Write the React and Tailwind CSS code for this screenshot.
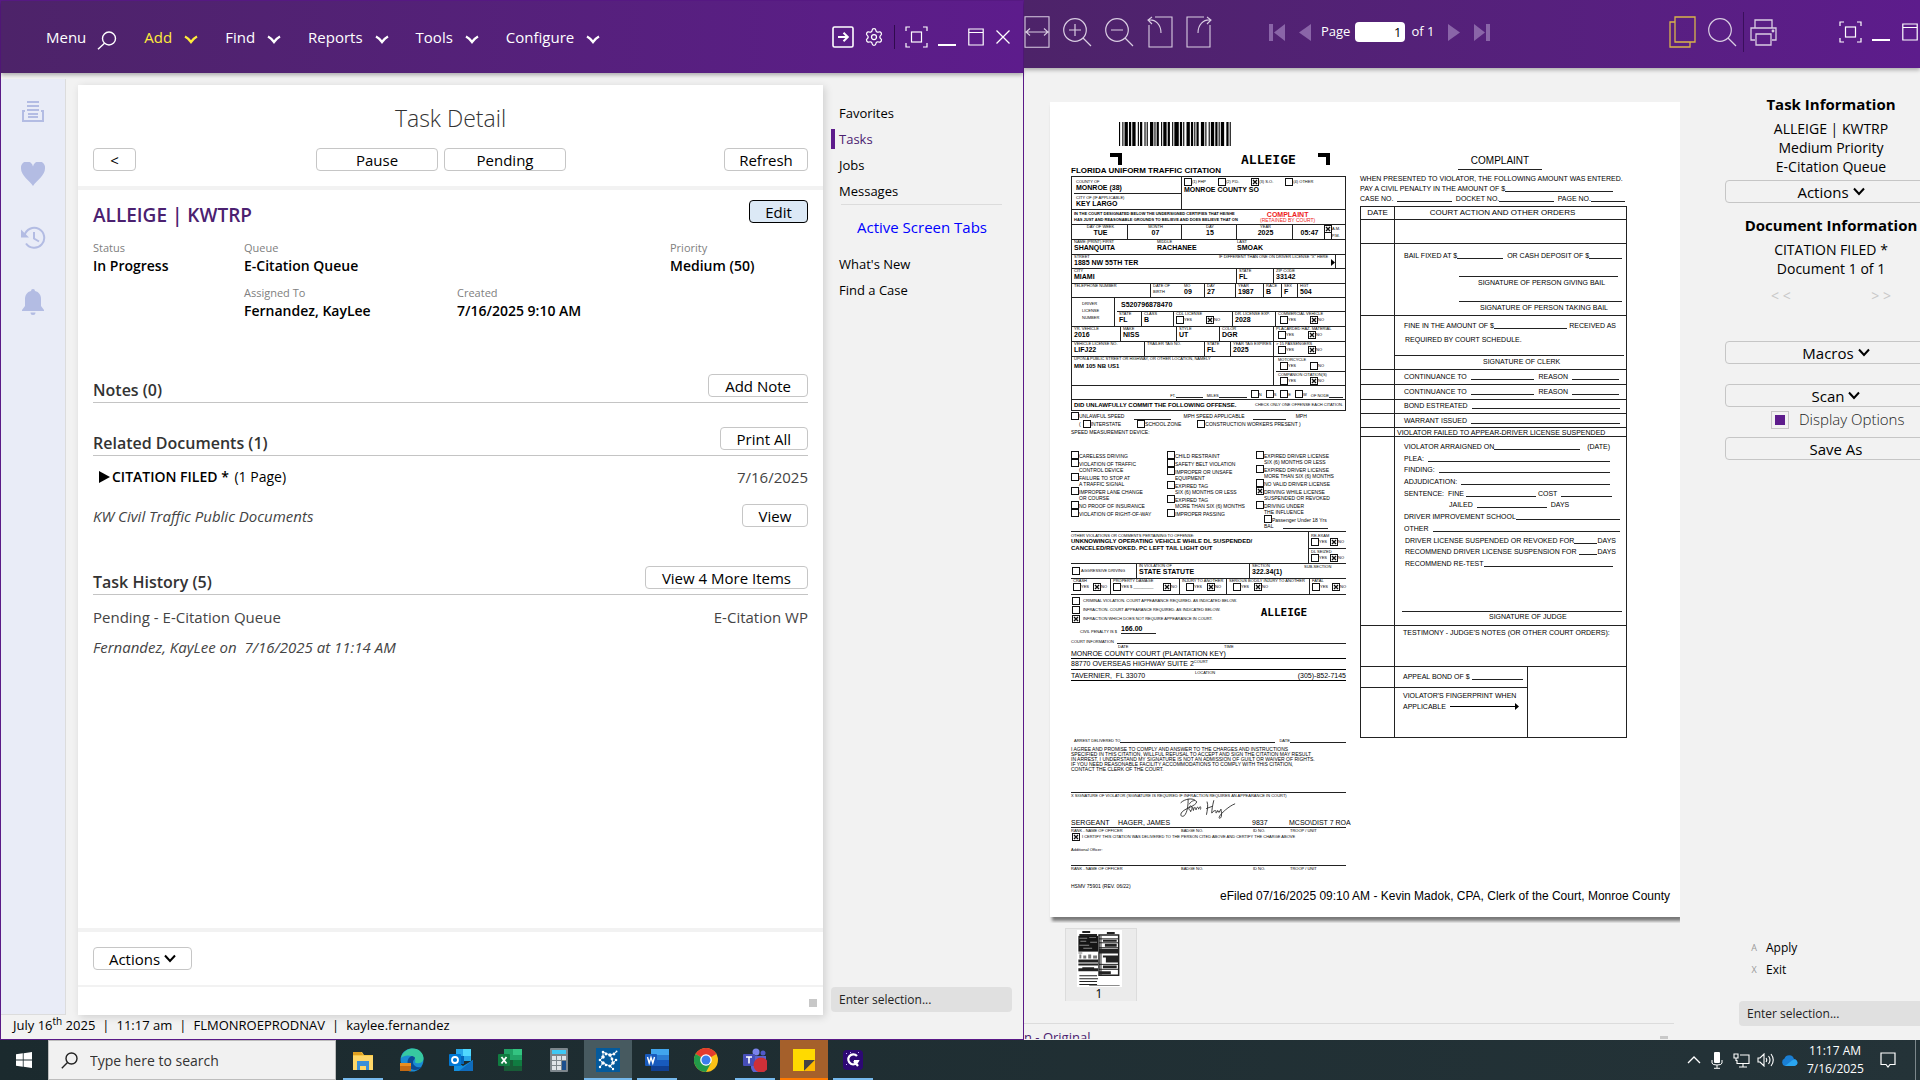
import React from "react";
import { Heart, Bell, Settings } from "lucide-react";

/* ---------- shared icons ---------- */

const Chevron = ({ className = "" }) => (
  <svg viewBox="0 0 14 9" className={`h-[9px] w-[14px] shrink-0 ${className}`} fill="none" stroke="currentColor" strokeWidth="2.4">
    <path d="M1 1.5 Q4 3 7 7 Q10 3 13 1.5" />
  </svg>
);

const Down = () => (
  <svg viewBox="0 0 12 9" className="h-[9px] w-3 shrink-0" fill="none" stroke="currentColor" strokeWidth="2">
    <path d="M1 1.5 L6 7 L11 1.5" />
  </svg>
);

const FocusIcon = () => (
  <svg viewBox="0 0 23 22" className="h-[22px] w-[23px] shrink-0" fill="none" stroke="currentColor" strokeWidth="1.2">
    <path d="M1 5V1h4M18 1h4v4M22 17v4h-4M5 21H1v-4" />
    <rect x="6.5" y="6" width="10" height="10" />
  </svg>
);

const MinIcon = () => (
  <svg viewBox="0 0 18 22" className="h-[22px] w-[18px] shrink-0" fill="currentColor">
    <rect x="0" y="18" width="18" height="2" />
  </svg>
);

const MaxIcon = () => (
  <svg viewBox="0 0 16 18" className="h-[18px] w-4 shrink-0" fill="none" stroke="currentColor" strokeWidth="1.2">
    <path d="M.8 1h14.4v16H.8zM.8 4.5h14.4" />
  </svg>
);

const IconButton = ({ label, children, className = "" }) => (
  <button type="button" aria-label={label} className={`flex shrink-0 items-center justify-center ${className}`}>
    {children}
  </button>
);

const Button = ({ children, className = "" }) => (
  <button
    type="button"
    className={`flex h-[23px] items-center justify-center gap-1 rounded-[4px] border text-[15px] leading-5 text-black ${className}`}
  >
    {children}
  </button>
);

/* ---------- left window ---------- */

const MENU = [
  { name: "Add", tone: "text-[#ffeb3b]" },
  { name: "Find", tone: "text-white" },
  { name: "Reports", tone: "text-white" },
  { name: "Tools", tone: "text-white" },
  { name: "Configure", tone: "text-white" },
];

const Header = () => (
  <header className="relative z-10 flex h-[72px] shrink-0 items-center bg-linear-to-r from-[#4d2369] to-[#5d1c8c] pr-[13px] pl-[45px] text-[15px] text-white shadow-[0_2px_4px_rgba(0,0,0,0.3)]">
    <nav className="flex items-center gap-[27px] pt-px">
      <button type="button" className="flex items-center gap-[11px]">
        Menu
        <svg viewBox="0 0 20 19" className="mt-1.5 h-[19px] w-5" fill="none" stroke="currentColor" strokeWidth="1.4">
          <circle cx="12" cy="7.5" r="6.5" />
          <path d="M7.5 12.3 L1 18.3" />
        </svg>
      </button>
      {MENU.map((m) => (
        <button key={m.name} type="button" className={`flex items-center gap-3 ${m.tone}`}>
          {m.name}
          <Chevron className="mt-1" />
        </button>
      ))}
    </nav>
    <div className="ml-auto flex items-center">
      <IconButton label="Open">
        <svg viewBox="0 0 22 22" className="size-[22px]" fill="none" stroke="currentColor" strokeWidth="1.6">
          <rect x="1" y="1" width="20" height="20" rx="1.5" />
          <path d="M6 11h9.5M11.5 6.8 L15.8 11 L11.5 15.2" strokeWidth="2" />
        </svg>
      </IconButton>
      <IconButton label="Settings" className="ml-2.5">
        <Settings className="size-5" strokeWidth={1.5} />
      </IconButton>
      <span className="mx-2.5 h-6 w-px bg-[#2f0b4d]" />
      <IconButton label="Focus"><FocusIcon /></IconButton>
      <IconButton label="Minimize" className="ml-2.5"><MinIcon /></IconButton>
      <IconButton label="Maximize" className="ml-3"><MaxIcon /></IconButton>
      <IconButton label="Close" className="ml-3">
        <svg viewBox="0 0 14 14" className="size-3.5" stroke="currentColor" strokeWidth="1.3">
          <path d="M.5 .5l13 13M13.5 .5l-13 13" />
        </svg>
      </IconButton>
    </div>
  </header>
);

const Rail = () => (
  <aside className="mt-1.5 flex w-[65px] shrink-0 flex-col items-center gap-[39px] border-r border-b border-[#dcdcdc] bg-[#e9ecf7] pt-5 text-[#b3bce3]">
    <IconButton label="Inbox">
      <svg viewBox="0 0 24 24" className="size-6" fill="none" stroke="currentColor" strokeWidth="2">
        <path d="M6 3h12M6 7h12M6 11h12M7 15h10M7 18h10" />
        <path d="M4 12H2v10h20V12h-2" />
      </svg>
    </IconButton>
    <IconButton label="Favorites">
      <svg viewBox="0 0 24 24" className="size-6" fill="currentColor">
        <path d="M12 24C8 18 0 13.500 0 6.500A6 6 0 0 1 12 4.500A6 6 0 0 1 24 6.500C24 13.500 16 18 12 24z" />
      </svg>
    </IconButton>
    <IconButton label="History">
      <svg viewBox="0 0 26 25" className="h-[25px] w-[26px]" fill="none" stroke="currentColor" strokeWidth="2">
        <path d="M4.5 10.5A10 10 0 1 1 6 18.5" />
        <path d="M14 7v6.5l5 3" />
        <path d="M1 4.5v8h8z" fill="currentColor" stroke="none" />
      </svg>
    </IconButton>
    <IconButton label="Alerts">
      <svg viewBox="0 0 24 26" className="h-[26px] w-6" fill="currentColor">
        <path d="M12 0a2 2 0 0 1 2 2c4 1 6 4 6 8v7l3 4v1H1v-1l3-4v-7c0-4 2-7 6-8a2 2 0 0 1 2-2zM9.500 23.500h5a2.500 2.500 0 0 1-5 0z" />
      </svg>
    </IconButton>
  </aside>
);

const Field = ({ label, value, className = "" }) => (
  <div className={className}>
    <dt className="text-[11px] leading-4 text-[#808080]">{label}</dt>
    <dd className="text-[14px] leading-5 font-semibold text-black">{value}</dd>
  </div>
);

const Section = ({ title, action, className = "" }) => (
  <div className={`flex h-7 items-start justify-between border-b border-[#c4c4c4] ${className}`}>
    <h3 className="mt-[5px] text-[16px] leading-5 font-semibold text-[#333]">{title}</h3>
    <Button className="-mt-px border-[#c6c6c6] bg-white px-4">{action}</Button>
  </div>
);

const TaskCard = () => (
  <main className="mt-3 ml-3 flex min-w-0 flex-1 flex-col bg-white shadow-[2px_2px_8px_rgba(0,0,0,0.15)]">
    <div className="flex h-[105px] shrink-0 flex-col border-b-4 border-[#f2f2f2] px-[15px]">
      <h1 className="mt-[17px] text-center text-[23px] leading-8 font-light text-[#333]">Task Detail</h1>
      <div className="mt-3.5 flex items-center justify-between">
        <Button className="w-[43px] border-[#c6c6c6] bg-white text-[13px]">&lt;</Button>
        <div className="ml-[22px] flex gap-1.5">
          <Button className="w-[122px] border-[#c6c6c6] bg-white">Pause</Button>
          <Button className="w-[122px] border-[#c6c6c6] bg-white">Pending</Button>
        </div>
        <Button className="w-[84px] border-[#c6c6c6] bg-white">Refresh</Button>
      </div>
    </div>
    <div className="flex-1 px-[15px] pt-2.5">
      <div className="flex items-start justify-between">
        <h2 className="pt-px text-[19px] leading-7 font-semibold text-[#4b2170]">ALLEIGE | KWTRP</h2>
        <Button className="w-[59px] border-black bg-[#dce9f6]">Edit</Button>
      </div>
      <dl className="mt-[11px] grid grid-cols-[151px_213px_213px_1fr] gap-y-[9px]">
        <Field label="Status" value="In Progress" />
        <Field label="Queue" value="E-Citation Queue" className="col-span-2" />
        <Field label="Priority" value="Medium (50)" />
        <Field label="Assigned To" value="Fernandez, KayLee" className="col-start-2" />
        <Field label="Created" value="7/16/2025 9:10 AM" />
      </dl>
      <Section title="Notes (0)" action="Add Note" className="mt-[54px]" />
      <Section title="Related Documents (1)" action="Print All" className="mt-[25px]" />
      <div className="mt-[11px] flex justify-between text-[14px] leading-5">
        <p className="flex items-center gap-0.5 pl-1.5 text-black">
          <svg viewBox="0 0 11 12" className="h-3 w-[11px]"><path d="M0 0L11 6L0 12z" /></svg>
          <span className="font-semibold">CITATION FILED *</span>&nbsp;(1 Page)
        </p>
        <span className="text-[15px] text-[#444]">7/16/2025</span>
      </div>
      <div className="mt-[17px] flex items-center justify-between">
        <p className="text-[15px] leading-5 text-[#444] italic">KW Civil Traffic Public Documents</p>
        <Button className="w-[66px] border-[#c6c6c6] bg-white">View</Button>
      </div>
      <Section title="Task History (5)" action="View 4 More Items" className="mt-10" />
      <div className="mt-3 flex justify-between text-[15px] leading-5 text-[#444]">
        <span>Pending - E-Citation Queue</span>
        <span>E-Citation WP</span>
      </div>
      <p className="mt-2.5 text-[15px] leading-5 text-[#444] italic">Fernandez, KayLee on&nbsp; 7/16/2025 at 11:14 AM</p>
    </div>
    <div className="border-t-4 border-b-2 border-[#f2f2f2] px-[15px] pt-[15px] pb-[15px]">
      <Button className="w-[99px] border-[#c6c6c6] bg-white">Actions <Down /></Button>
    </div>
    <div className="flex h-7 items-center justify-end pr-1.5">
      <span className="mt-1 size-2 bg-[#c8c8c8]" />
    </div>
  </main>
);

const NAV = ["Favorites", "Tasks", "Jobs", "Messages"];

const SideNav = () => (
  <aside className="flex w-[200px] shrink-0 flex-col pr-[11px] pl-2 text-[13px] text-black">
    <nav className="mt-[27px] flex flex-col">
      {NAV.map((n) => (
        <a
          key={n}
          href="#"
          className={n === "Tasks" ? "my-[3px] border-l-4 border-[#5d1c8c] pl-1 leading-5 text-[#4b2170]" : "my-[3px] pl-2 leading-5"}
        >
          {n}
        </a>
      ))}
    </nav>
    <div className="mx-2.5 border-t border-[#dcdcdc] pt-3">
      <p className="pl-4 text-[15px] leading-5 text-[#0000ff]">Active Screen Tabs</p>
    </div>
    <nav className="mt-3.5 flex flex-col">
      <a href="#" className="my-[3px] pl-2 leading-5">What's New</a>
      <a href="#" className="my-[3px] pl-2 leading-5">Find a Case</a>
    </nav>
    <input
      aria-label="Enter selection"
      placeholder="Enter selection..."
      className="mt-auto mb-[3px] h-[25px] w-full rounded-[4px] bg-[#e0e0e0] px-2 text-[12px] placeholder:text-[#222]"
    />
  </aside>
);

const LeftWindow = () => (
  <section className="z-10 flex min-w-0 flex-col border border-[#5a1a87] bg-[#f2f2f2]">
    <Header />
    <div className="flex min-h-0 flex-1">
      <Rail />
      <TaskCard />
      <SideNav />
    </div>
    <footer className="flex h-6 shrink-0 items-center gap-[7px] pb-0.5 pl-3 text-[13px] text-black">
      <span>July 16<sup className="text-[10px]">th</sup> 2025</span>
      <span>|</span>
      <span>11:17 am</span>
      <span>|</span>
      <span>FLMONROEPRODNAV</span>
      <span>|</span>
      <span>kaylee.fernandez</span>
    </footer>
  </section>
);

/* ---------- citation page: small parts ---------- */

const Box = ({ on }) => (
  <svg viewBox="0 0 8 8" className="size-2 shrink-0" fill="none" stroke="#111">
    <rect x=".5" y=".5" width="7" height="7" strokeWidth="1" />
    {on && <path d="M2 2l4 4M6 2l-4 4" strokeWidth="1.4" />}
  </svg>
);

const Mark = () => (
  <svg viewBox="0 0 12 12" className="size-3"><path d="M0 0h12v12h-4V4H0z" /></svg>
);

const Blank = ({ w }) => <span className={`shrink-0 border-b border-[#222] ${w}`} />;

const Rule = ({ c = "" }) => <div className={`h-px shrink-0 bg-[#222] ${c}`} />;

const Row = ({ h, children }) => <div className={`flex shrink-0 border-t border-[#222] ${h}`}>{children}</div>;

const Cell = ({ w, l, v, children }) => (
  <div className={`shrink-0 border-l border-[#222] pl-0.5 first:border-l-0 ${w}`}>
    {l !== undefined && <p className="text-[4px] leading-[4px]">{l}</p>}
    {v && <p className="text-[7px] leading-[8px] font-bold">{v}</p>}
    {children}
  </div>
);

const YesNo = ({ yes, no, c = "", gap = "w-[30px]" }) => (
  <div className={`flex text-[4px] leading-[4px] ${c}`}>
    <span className={`flex shrink-0 items-center ${gap}`}><Box on={yes} />YES</span>
    <span className="flex items-center"><Box on={no} />NO</span>
  </div>
);

const BARS = [1,2,1,1,3,1,2,1,3,2,1,1,2,2,1,1,1,2,3,1,1,1,2,2,1,1,3,1,2,2,1,1,4,1,2,1,1,2,3,1,2,1,1,1,2,2,3,1,1,2,1,1,3,1,2,1,1,1,3,2,2,1,1,1];

const Barcode = () => {
  let x = 0;
  return (
    <svg viewBox="0 0 103 24" preserveAspectRatio="none" className="h-6 w-[114px]" role="img" aria-label="Barcode">
      {BARS.map((w, i) => {
        const at = x;
        x += w;
        return i % 2 === 0 ? <rect key={i} x={at} y="0" width={w} height="24" fill="#000" /> : null;
      })}
    </svg>
  );
};

const Item = ({ on, a, b, c = "" }) => (
  <div className={`flex shrink-0 ${b ? "h-3.5" : "h-2"} ${c}`}>
    <Box on={on} />
    <span className="pt-0.5 leading-[6px]">{a}{b && <><br />{b}</>}</span>
  </div>
);

const OfficerLabels = () => (
  <div className="grid grid-cols-[110px_72px_37px_1fr] text-[4px] leading-[4px]">
    <span>RANK - NAME OF OFFICER</span><span>BADGE NO.</span><span>ID NO.</span><span>TROOP / UNIT</span>
  </div>
);

/* ---------- citation page: left half ---------- */

const CitationTable = () => (
  <div className="mt-px flex flex-col border-x border-b border-[#222]">
    <Row h="h-[33px]">
      <Cell w="w-[109px] pl-0">
        <div className="h-[17px] border-b border-[#222] pt-0.5 pl-0.5">
          <p className="text-[4px] leading-[5px]">COUNTY OF</p>
          <p className="text-[7px] leading-[8px] font-bold">MONROE (38)</p>
        </div>
        <div className="pt-px pl-0.5">
          <p className="text-[4px] leading-[5px]">CITY OF (IF APPLICABLE)</p>
          <p className="text-[7px] leading-[8px] font-bold">KEY LARGO</p>
        </div>
      </Cell>
      <Cell w="w-[164px]">
        <div className="flex items-center gap-3 pt-px text-[4px] leading-[4px]">
          <span className="flex items-center"><Box />(1) FHP</span>
          <span className="flex items-center"><Box />(2) P.D.</span>
          <span className="flex items-center"><Box on />(3) S.O.</span>
          <span className="flex items-center"><Box />(4) OTHER</span>
        </div>
        <p className="text-[7px] leading-[8px] font-bold">MONROE COUNTY SO</p>
      </Cell>
    </Row>
    <Row h="h-[15px]">
      <div className="w-[188px] pt-px pl-0.5 text-[4px] leading-[6px] font-bold">
        IN THE COURT DESIGNATED BELOW THE UNDERSIGNED CERTIFIES THAT HE/SHE
        <br />
        HAS JUST AND REASONABLE GROUNDS TO BELIEVE AND DOES BELIEVE THAT ON
      </div>
      <div className="text-center text-[#ee1c1c]">
        <p className="pt-px text-[7px] leading-[7px] font-bold">COMPLAINT</p>
        <p className="text-[5px] leading-[5px]">(RETAINED BY COURT)</p>
      </div>
    </Row>
    <Row h="h-[15px]">
      <Cell w="w-[55px] text-center" l="DAY OF WEEK" v="TUE" />
      <Cell w="w-[54px] text-center" l="MONTH" v="07" />
      <Cell w="w-[55px] text-center" l="DAY" v="15" />
      <Cell w="w-[56px] text-center" l="YEAR" v="2025" />
      <Cell w="w-[53px] flex">
        <p className="w-[29px] pt-1 text-center text-[7px] leading-[8px] font-bold">05:47</p>
        <div className="text-[4px] leading-[7px]">
          <span className="flex h-[7px] items-center"><Box on />A.M.</span>
          <span className="flex h-[7px] items-center"><Box />P.M.</span>
        </div>
      </Cell>
    </Row>
    <Row h="h-[15px]">
      <Cell w="w-[83px]" l="NAME (PRINT)   FIRST" v="SHANQUITA" />
      <Cell w="w-[80px] border-l-0" l="MIDDLE" v="RACHANEE" />
      <Cell w="w-[100px] border-l-0" l="LAST" v="SMOAK" />
    </Row>
    <Row h="h-[14px]">
      <Cell w="w-[145px]" l="STREET" v="1885 NW 55TH TER" />
      <Cell w="w-[118px] border-l-0" l={'IF DIFFERENT THAN ONE ON DRIVER LICENSE "X" HERE'}>
        <svg viewBox="0 0 4 7" className="ml-auto h-[7px] w-1"><path d="M0 0l4 3.5L0 7z" /></svg>
      </Cell>
      <Cell w="w-[10px]" />
    </Row>
    <Row h="h-[15px]">
      <Cell w="w-[164px]" l="CITY" v="MIAMI" />
      <Cell w="w-[37px]" l="STATE" v="FL" />
      <Cell w="w-[72px]" l="ZIP CODE" v="33142" />
    </Row>
    <Row h="h-[14px]">
      <Cell w="w-[78px]" l="TELEPHONE NUMBER" />
      <Cell w="w-[32px]" l="DATE OF"><p className="pt-0.5 text-[4px] leading-[4px]">BIRTH</p></Cell>
      <Cell w="w-[22px] border-l-0" l="MO" v="09" />
      <Cell w="w-[31px]" l="DAY" v="27" />
      <Cell w="w-[28px]" l="YEAR" v="1987" />
      <Cell w="w-[18px]" l="RACE" v="B" />
      <Cell w="w-[16px]" l="SEX" v="F" />
      <Cell w="w-[48px]" l="HGT" v="504" />
    </Row>
    <Row h="h-[29px]">
      <Cell w="w-[42px]"><p className="pt-0.5 pl-2 text-[4px] leading-[7px]">DRIVER<br />LICENSE<br />NUMBER</p></Cell>
      <Cell w="w-[231px] pl-0">
        <p className="pt-0.5 pl-1 text-[7px] leading-[10px] font-bold">S520796878470</p>
        <div className="mt-px flex h-[15px] border-t border-[#222]">
          <Cell w="w-[24px]" l="STATE" v="FL" />
          <Cell w="w-[32px]" l="CLASS" v="B" />
          <Cell w="w-[59px]" l="CDL LICENSE"><YesNo no /></Cell>
          <Cell w="w-[43px]" l="DR. LICENSE EXP." v="2028" />
          <Cell w="w-[72px]" l="COMMERCIAL VEHICLE"><YesNo no c="pl-0.5" /></Cell>
        </div>
      </Cell>
    </Row>
    <Row h="h-[15px]">
      <Cell w="w-[48px]" l="YR. VEHICLE" v="2016" />
      <Cell w="w-[56px]" l="MAKE" v="NISS" />
      <Cell w="w-[43px]" l="STYLE" v="UT" />
      <Cell w="w-[54px]" l="COLOR" v="DGR" />
      <Cell w="w-[72px]" l="PLACARDED HAZ. MATERIAL"><YesNo no c="pl-0.5" /></Cell>
    </Row>
    <Row h="h-[15px]">
      <Cell w="w-[72px]" l="VEHICLE LICENSE NO." v="LIFJ22" />
      <Cell w="w-[60px]" l="TRAILER TAG NO." />
      <Cell w="w-[26px]" l="STATE" v="FL" />
      <Cell w="w-[43px]" l="YEAR TAG EXPIRES" v="2025" />
      <Cell w="w-[72px]" l="> 15 PASSENGERS"><YesNo no c="pl-0.5" /></Cell>
    </Row>
    <Row h="h-[29px]">
      <Cell w="w-[201px]" l="UPON A PUBLIC STREET OR HIGHWAY, OR OTHER LOCATION, NAMELY">
        <p className="pt-0.5 text-[6px] leading-[7px] font-bold">MM 105 NB US1</p>
      </Cell>
      <Cell w="w-[72px] pl-0">
        <div className="h-3.5 pl-0.5"><p className="text-[4px] leading-[5px]">MOTORCYCLE</p><YesNo c="pl-0.5" /></div>
        <div className="h-3.5 border-t border-[#222] pl-0.5"><p className="text-[4px] leading-[5px]">COMPANION CITATION(S)</p><YesNo no c="pl-0.5" /></div>
      </Cell>
    </Row>
    <Row h="h-[14px]">
      <div className="flex h-full w-full items-end justify-end gap-1 pr-0.5 pb-px text-[4px] leading-[5px]">
        <span className="flex">FT.<Blank w="w-[27px]" /></span>
        <span className="flex">MILES<Blank w="w-[28px]" /></span>
        <span className="flex items-center"><Box />N</span>
        <span className="flex items-center"><Box />S</span>
        <span className="flex items-center"><Box />E</span>
        <span className="flex items-center"><Box />W</span>
        <span className="flex">OF NODE<Blank w="w-[14px]" /></span>
      </div>
    </Row>
    <Row h="h-[11px]">
      <div className="flex w-full items-center justify-between px-0.5">
        <p className="text-[6px] leading-[8px] font-bold">DID UNLAWFULLY COMMIT THE FOLLOWING OFFENSE.</p>
        <p className="text-[4px] leading-[6px]">CHECK ONLY ONE OFFENSE EACH CITATION.</p>
      </div>
    </Row>
  </div>
);

const Offenses = () => (
  <div className="h-[120px] pt-px text-[5px] leading-[6px]">
    <div className="flex h-2 items-center">
      <Box />UNLAWFUL SPEED <Blank w="ml-2.5 h-2 w-[37px]" />
      <span className="ml-3">MPH SPEED APPLICABLE</span><Blank w="ml-2 h-2 w-[33px]" /><span className="ml-2.5">MPH</span>
    </div>
    <div className="flex h-2 items-center pl-2">
      (<span className="ml-0.5 flex items-center"><Box />INTERSTATE</span>
      <span className="ml-4 flex items-center"><Box />SCHOOL ZONE</span>
      <span className="ml-4 flex items-center"><Box />CONSTRUCTION WORKERS PRESENT )</span>
    </div>
    <p className="pt-px">SPEED MEASUREMENT DEVICE:</p>
    <div className="mt-4 grid grid-cols-[96px_89px_1fr]">
      <div className="flex flex-col">
        <Item a="CARELESS DRIVING" />
        <Item a="VIOLATION OF TRAFFIC" b="CONTROL DEVICE" />
        <Item a="FAILURE TO STOP AT" b="A TRAFFIC SIGNAL" />
        <Item a="IMPROPER LANE CHANGE" b="OR COURSE" />
        <Item a="NO PROOF OF INSURANCE" />
        <Item a="VIOLATION OF RIGHT-OF-WAY" />
      </div>
      <div className="flex flex-col">
        <Item a="CHILD RESTRAINT" />
        <Item a="SAFETY BELT VIOLATION" />
        <Item a="IMPROPER OR UNSAFE" b="EQUIPMENT" />
        <Item a="EXPIRED TAG" b="SIX (6) MONTHS OR LESS" />
        <Item a="EXPIRED TAG" b="MORE THAN SIX (6) MONTHS" />
        <Item a="IMPROPER PASSING" />
      </div>
      <div className="flex flex-col">
        <Item a="EXPIRED DRIVER LICENSE" b="SIX (6) MONTHS OR LESS" />
        <Item a="EXPIRED DRIVER LICENSE" b="MORE THAN SIX (6) MONTHS" />
        <Item a="NO VALID DRIVER LICENSE" />
        <Item on a="DRIVING WHILE LICENSE" b="SUSPENDED OR REVOKED" />
        <Item a="DRIVING UNDER" b="THE INFLUENCE" />
        <Item a="Passenger Under 18 Yrs" c="ml-2" />
        <span className="ml-2 flex items-end">BAL<Blank w="ml-2.5 w-[45px]" /></span>
      </div>
    </div>
  </div>
);

const CitationLower = () => (
  <>
    <Row h="h-[32px]">
      <div className="w-[237px] pt-0.5">
        <p className="text-[4px] leading-[4px]">OTHER VIOLATIONS OR COMMENTS PERTAINING TO OFFENSE:</p>
        <p className="text-[6px] leading-[7px] font-bold">UNKNOWINGLY OPERATING VEHICLE WHILE DL SUSPENDED/<br />CANCELED/REVOKED. PC LEFT TAIL LIGHT OUT</p>
      </div>
      <div className="flex-1 border-l border-[#222]">
        <div className="h-4 pl-0.5"><p className="pt-px text-[4px] leading-[5px]">RE-EXAM</p><YesNo no gap="w-[19px]" /></div>
        <div className="border-t border-[#222] pl-0.5"><p className="text-[4px] leading-[5px]">DL SEIZED</p><YesNo no gap="w-[19px]" /></div>
      </div>
    </Row>
    <Row h="h-[15px]">
      <div className="flex w-[65px] items-center gap-px pl-px text-[4px] leading-[4px]"><Box />AGGRESSIVE DRIVING</div>
      <Cell w="w-[113px]" l="IN VIOLATION OF" v="STATE STATUTE" />
      <Cell w="w-[55px]" l="SECTION" v="322.34(1)" />
      <p className="text-[4px] leading-[5px]">SUB-SECTION</p>
    </Row>
    <div className="flex h-[17px] shrink-0 border-y border-[#222]">
      <Cell w="w-[39px]" l="CRASH"><YesNo no gap="w-[20px]" /></Cell>
      <Cell w="w-[69px]" l="PROPERTY DAMAGE">
        <div className="flex text-[4px] leading-[4px]">
          <span className="flex w-[50px] items-center"><Box />YES $ _________</span>
          <span className="flex items-center"><Box on />NO</span>
        </div>
      </Cell>
      <Cell w="w-[47px]" l="INJURY TO ANOTHER"><YesNo no gap="w-[21px]" c="pl-1" /></Cell>
      <Cell w="w-[83px]" l="SERIOUS BODILY INJURY TO ANOTHER"><YesNo no gap="w-[21px]" c="pl-1" /></Cell>
      <Cell w="w-[36px]" l="FATAL"><YesNo no gap="w-[20px]" /></Cell>
    </div>
    <div className="flex items-center justify-between pt-0.5 text-[4px] leading-[4px]">
      <div className="flex flex-col gap-px pl-px">
        <span className="flex items-center gap-[3px]"><Box />CRIMINAL VIOLATION.  COURT APPEARANCE REQUIRED.  AS INDICATED BELOW.</span>
        <span className="flex items-center gap-[3px]"><Box />INFRACTION.  COURT APPEARANCE REQUIRED.  AS INDICATED BELOW.</span>
        <span className="flex items-center gap-[3px]"><Box on />INFRACTION WHICH DOES NOT REQUIRE APPEARANCE IN COURT.</span>
      </div>
      <p className="pt-1.5 pr-[39px] font-['DejaVu_Sans_Mono',monospace] text-[11px] leading-3 font-bold">ALLEIGE</p>
    </div>
    <div className="mt-px flex h-2.5 items-end gap-1 pl-[9px]">
      <span className="text-[4px] leading-[5px]">CIVIL PENALTY IS $</span>
      <span className="w-[35px] border-b border-[#222] text-[7px] leading-[8px] font-bold">166.00</span>
    </div>
    <div className="mt-[5px] flex h-[5px] items-end justify-between text-[4px] leading-[4px]">
      COURT INFORMATION <Blank w="w-[229px]" />
    </div>
    <div className="flex h-[5px] pl-[47px] text-[4px] leading-[5px]"><span className="w-[106px]">DATE</span>TIME</div>
    <p className="h-[10px] border-b border-black text-[7px] leading-[9px]">MONROE COUNTY COURT (PLANTATION KEY)</p>
    <p className="flex h-[11px] border-b border-black text-[7px] leading-[10px]">
      88770 OVERSEAS HIGHWAY SUITE 2<span className="text-[4px] leading-[5px]">COURT</span>
    </p>
    <div className="flex h-[11px] justify-between border-b border-black text-[7px] leading-[11px]">
      <span className="w-[124px]">TAVERNIER,&nbsp; FL 33070</span>
      <span className="text-[4px] leading-[5px]">LOCATION</span>
      <span className="ml-auto">(305)-852-7145</span>
    </div>
    <div className="mt-[56px] flex h-1.5 items-end pl-[3px] text-[4px] leading-[5px]">
      ARREST DELIVERED TO<Blank w="w-[155px]" /><span className="ml-1">DATE</span><span className="flex-1 border-b border-[#222]" />
    </div>
    <p className="mt-1 text-[5px] leading-[5px]">
      I AGREE AND PROMISE TO COMPLY AND ANSWER TO THE CHARGES AND INSTRUCTIONS<br />
      SPECIFIED IN THIS CITATION, WILLFUL REFUSAL TO ACCEPT AND SIGN THE CITATION MAY RESULT<br />
      IN ARREST, I UNDERSTAND MY SIGNATURE IS NOT AN ADMISSION OF GUILT OR WAIVER OF RIGHTS.<br />
      IF YOU NEED REASONABLE FACILITY ACCOMMODATIONS TO COMPLY WITH THIS CITATION,<br />
      CONTACT THE CLERK OF THE COURT.
    </p>
    <Rule c="mt-5" />
    <p className="pt-px text-[4px] leading-[4px]">X SIGNATURE OF VIOLATOR (SIGNATURE IS REQUIRED IF INFRACTION REQUIRES AN APPEARANCE IN COURT)</p>
    <svg viewBox="0 0 170 64" className="ml-[108px] h-[21px] w-[57px]" fill="none" stroke="#222" strokeWidth="2.6" strokeLinecap="round" strokeLinejoin="round" role="img" aria-label="Signature">
      <path d="M4 14C16 2 38 0 46 6M26 4C26 22 24 44 14 54C4 60 0 50 8 42C20 30 50 24 52 12C50 4 34 8 30 18M34 40C26 36 26 26 34 24C40 26 38 38 34 40ZM40 28L42 38C44 28 48 24 50 36C52 28 56 24 58 34C62 22 66 26 64 34M84 12C88 22 84 40 82 50M82 32L98 26M104 8C100 24 98 38 98 46C102 40 108 36 112 40C106 48 116 46 116 38L120 44L126 34C128 46 130 60 122 62C116 60 128 46 140 36C150 28 158 22 168 18" />
    </svg>
    <div className="grid h-2 grid-cols-[47px_134px_37px_1fr] text-[7px] leading-[8px]">
      <span>SERGEANT</span><span>HAGER, JAMES</span><span>9837</span><span>MCSO\DIST 7 ROA</span>
    </div>
    <Rule />
    <div className="pt-px"><OfficerLabels /></div>
    <p className="flex items-center gap-0.5 pl-px text-[4px] leading-[4px]"><Box on />I CERTIFY THIS CITATION WAS DELIVERED TO THE PERSON CITED ABOVE AND CERTIFY THE CHARGE ABOVE</p>
    <p className="mt-1.5 text-[4px] leading-[5px]">Additional Officer:</p>
    <Rule c="mt-[13px]" />
    <div className="pt-px"><OfficerLabels /></div>
    <p className="mt-3 text-[5px] leading-[6px]">HSMV 75901 (REV. 06/22)</p>
  </>
);

/* ---------- citation page: right half ---------- */

const Entry = ({ h, children, c = "" }) => (
  <div className={`flex shrink-0 border-t border-[#222] ${h}`}>
    <div className="w-[33px] shrink-0" />
    <div className={`min-w-0 flex-1 border-l border-[#222] ${c}`}>{children}</div>
  </div>
);

const L = ({ c = "", children }) => <div className={`flex h-[7px] items-end ${c}`}>{children}</div>;

const Fill = ({ c = "" }) => <span className={`flex-1 border-b border-[#222] ${c}`} />;

const Complaint = () => (
  <div className="w-[267px] shrink-0 pt-[54px] text-[7px] leading-[7px]">
    <p className="ml-[98px] w-[84px] border-b border-[#222] pb-[3px] text-center text-[10px] leading-[10px]">COMPLAINT</p>
    <p className="mt-[5px]">WHEN PRESENTED TO VIOLATOR, THE FOLLOWING AMOUNT WAS ENTERED.</p>
    <L c="mt-[3px] pr-3.5">PAY A CIVIL PENALTY IN THE AMOUNT OF $<Fill /></L>
    <L c="mt-[3px] pr-0.5">CASE NO.<Fill c="ml-1" /><span className="ml-1">DOCKET NO.</span><Fill /><span className="ml-1">PAGE NO.</span><Fill c="max-w-[34px]" /></L>
    <div className="mt-1 border-x border-b border-[#222]">
      <div className="flex h-[13px] border-t border-[#222] text-center text-[8px] leading-[12px]">
        <span className="w-[33px]">DATE</span>
        <span className="flex-1 border-l border-[#222] pr-4">COURT ACTION AND OTHER ORDERS</span>
      </div>
      <Entry h="h-6" />
      <Entry h="h-[72px]" c="pt-2 pl-[9px]">
        <L c="pr-1">BAIL FIXED AT $<Blank w="w-[46px]" /><span className="ml-1">OR CASH DEPOSIT OF $</span><Fill /></L>
        <Rule c="mt-[17px] ml-[55px] mr-2" />
        <p className="mt-0.5 pl-[74px]">SIGNATURE OF PERSON GIVING BAIL</p>
        <Rule c="mt-[15px] ml-[55px] mr-1" />
        <p className="mt-0.5 pl-[76px]">SIGNATURE OF PERSON TAKING BAIL</p>
      </Entry>
      <Entry h="h-[54px]" c="pt-1.5">
        <L c="pr-2.5 pl-[9px]">FINE IN THE AMOUNT OF $<Fill /><span className="ml-0.5">RECEIVED AS</span></L>
        <p className="mt-[7px] pl-2.5">REQUIRED BY COURT SCHEDULE.</p>
        <Rule c="mt-3 mr-0.5" />
        <p className="mt-0.5 pl-[88px]">SIGNATURE OF CLERK</p>
      </Entry>
      <Entry h="h-[15px]" c="pt-[3px] pr-[7px] pl-[9px]"><L>CONTINUANCE TO<Fill c="mx-1" />REASON<Blank w="ml-1 w-[47px]" /></L></Entry>
      <Entry h="h-[15px]" c="pt-[3px] pr-[7px] pl-[9px]"><L>CONTINUANCE TO<Fill c="mx-1" />REASON<Blank w="ml-1 w-[47px]" /></L></Entry>
      <Entry h="h-3.5" c="pt-0.5 pr-1.5 pl-[9px]"><L>BOND ESTREATED<Fill c="ml-1" /></L></Entry>
      <Entry h="h-3.5" c="pt-[3px] pr-1.5 pl-[9px]"><L>WARRANT ISSUED<Fill c="ml-1" /></L></Entry>
      <Entry h="h-[9px]" c="pt-px pl-0.5">VIOLATOR FAILED TO APPEAR-DRIVER LICENSE SUSPENDED</Entry>
      <Entry h="h-[189px]" c="pt-1.5">
        <div className="flex h-[124px] flex-col justify-between pr-1.5 pl-[9px]">
          <L c="pr-2.5">VIOLATOR ARRAIGNED ON<Fill /><span className="ml-[7px]">(DATE)</span></L>
          <L c="pr-2.5">PLEA:<Fill c="ml-1" /></L>
          <L c="pr-2.5">FINDING:<Fill c="ml-1" /></L>
          <L c="pr-2.5">ADJUDICATION:<Fill c="ml-1" /></L>
          <L c="pr-2">SENTENCE:&nbsp; FINE<Blank w="ml-0.5 w-[70px]" /><span className="ml-0.5">COST</span><Fill c="ml-1" /></L>
          <L c="pl-[45px]">JAILED<Blank w="ml-1 w-[70px]" /><span className="ml-1">DAYS</span></L>
          <L>DRIVER IMPROVEMENT SCHOOL<Fill /></L>
          <L>OTHER<Fill c="ml-1" /></L>
          <L c="pr-1 pl-px">DRIVER LICENSE SUSPENDED OR REVOKED FOR<Fill />DAYS</L>
          <L c="pr-1 pl-px">RECOMMEND DRIVER LICENSE SUSPENSION FOR<Fill c="ml-0.5" />DAYS</L>
          <L c="pr-[7px] pl-px">RECOMMEND RE-TEST<Fill /></L>
        </div>
        <Rule c="mt-11 ml-[7px] mr-1" />
        <p className="mt-px pl-[94px]">SIGNATURE OF JUDGE</p>
      </Entry>
      <Entry h="h-[41px]" c="pt-[3px] pl-2">TESTIMONY - JUDGE'S NOTES (OR OTHER COURT ORDERS):</Entry>
      <div className="flex h-[71px] border-t border-[#222]">
        <div className="w-[166px]">
          <div className="flex h-5">
            <div className="w-[33px]" />
            <div className="flex-1 border-l border-[#222] pt-[6px] pr-1 pl-2"><L>APPEAL BOND OF $<Fill c="ml-0.5" /></L></div>
          </div>
          <div className="flex h-[50px] border-t border-[#222]">
            <div className="w-[33px]" />
            <div className="flex-1 border-l border-[#222] pt-1 pl-2">
              <p>VIOLATOR'S FINGERPRINT WHEN</p>
              <p className="flex items-center gap-1 pt-1">
                APPLICABLE
                <svg viewBox="0 0 69 7" className="h-[7px] w-[69px]"><path d="M0 3h65V0l4 3.5L65 7V4H0z" /></svg>
              </p>
            </div>
          </div>
        </div>
        <div className="flex-1 border-l border-[#222]" />
      </div>
    </div>
  </div>
);

const DocumentPage = () => (
  <article className="ml-[26px] flex h-[815px] flex-col overflow-hidden bg-white font-['Liberation_Sans',Arial,sans-serif] whitespace-nowrap text-black shadow-[2px_4px_3px_rgba(0,0,0,0.5)]">
    <div className="flex gap-3.5 pl-[21px]">
      <div className="flex w-[275px] shrink-0 flex-col pt-5">
        <div className="pl-12"><Barcode /></div>
        <div className="mt-1 flex h-[17px] items-center pl-[39px]">
          <Mark />
          <p className="ml-[119px] flex-1 pt-0.5 font-['DejaVu_Sans_Mono',monospace] text-[13px] leading-4 font-bold">ALLEIGE</p>
          <span className="mr-4"><Mark /></span>
        </div>
        <h2 className="text-[8px] leading-[8px] font-bold">FLORIDA UNIFORM TRAFFIC CITATION</h2>
        <CitationTable />
        <Offenses />
        <CitationLower />
      </div>
      <Complaint />
    </div>
    <p className="mt-auto pr-2.5 pb-3.5 text-right text-[12px] leading-[14px]">
      eFiled 07/16/2025 09:10 AM - Kevin Madok, CPA, Clerk of the Court, Monroe County
    </p>
  </article>
);

/* ---------- right window ---------- */

const ViewerToolbar = () => (
  <header className="relative z-10 flex h-[68px] shrink-0 items-center overflow-hidden bg-linear-to-r from-[#4d2369] to-[#5d1c8c] pr-0.5 pb-1 text-[14px] text-white shadow-[0_2px_4px_rgba(0,0,0,0.3)]">
    <div className="flex items-center gap-[13px] text-[#d9cde2]">
      <IconButton label="Fit width">
        <svg viewBox="0 0 26 32" className="h-8 w-[26px]" fill="none" stroke="currentColor" strokeWidth="1.1">
          <path d="M1 .7h24v30.6H1zM2 16h22M6 12.5L2 16l4 3.5M20 12.5l4 3.5-4 3.5" />
        </svg>
      </IconButton>
      <IconButton label="Zoom in">
        <svg viewBox="0 0 29 30" className="h-[30px] w-[29px]" fill="none" stroke="currentColor" strokeWidth="1.2">
          <circle cx="12" cy="13" r="11.3" /><path d="M20 21l8 8M6 13h12M12 7v12" />
        </svg>
      </IconButton>
      <IconButton label="Zoom out">
        <svg viewBox="0 0 29 30" className="h-[30px] w-[29px]" fill="none" stroke="currentColor" strokeWidth="1.2">
          <circle cx="12" cy="13" r="11.3" /><path d="M20 21l8 8M6 13h12" />
        </svg>
      </IconButton>
      <IconButton label="Rotate left">
        <svg viewBox="0 0 26 32" className="h-8 w-[26px]" fill="none" stroke="currentColor" strokeWidth="1.1">
          <path d="M8 1h17v30H2V9M1 4c8-1 13 5 13 13M5 1L1 4l4 4" />
        </svg>
      </IconButton>
      <IconButton label="Rotate right">
        <svg viewBox="0 0 26 32" className="h-8 w-[26px]" fill="none" stroke="currentColor" strokeWidth="1.1">
          <path d="M18 1H1v30h23V9M25 4c-8-1-13 5-13 13M21 1l4 3-4 4" />
        </svg>
      </IconButton>
    </div>
    <div className="ml-[57px] flex items-center text-[#8a65a8]">
      <IconButton label="First page">
        <svg viewBox="0 0 16 17" className="h-[17px] w-4" fill="currentColor"><path d="M0 0h4v17H0zM16 0v17L5 8.5z" /></svg>
      </IconButton>
      <IconButton label="Previous page" className="ml-3.5">
        <svg viewBox="0 0 12 17" className="h-[17px] w-3" fill="currentColor"><path d="M12 0v17L0 8.5z" /></svg>
      </IconButton>
      <label className="ml-2.5 flex items-center gap-[5px] text-[13px] text-white">
        Page
        <input defaultValue="1" className="h-5 w-[50px] rounded-[4px] bg-white px-1 text-right text-[13px] text-black" />
      </label>
      <span className="ml-1.5 text-[13px] text-white">of 1</span>
      <IconButton label="Next page" className="ml-3.5">
        <svg viewBox="0 0 12 17" className="h-[17px] w-3" fill="currentColor"><path d="M0 0v17l12-8.5z" /></svg>
      </IconButton>
      <IconButton label="Last page" className="ml-3.5">
        <svg viewBox="0 0 16 17" className="h-[17px] w-4" fill="currentColor"><path d="M16 0h-4v17h4zM0 0v17l11-8.5z" /></svg>
      </IconButton>
    </div>
    <div className="ml-auto flex items-center">
      <IconButton label="Pages" className="text-[#d9b44a]">
        <svg viewBox="0 0 27 32" className="h-8 w-[27px]" fill="none" stroke="currentColor" strokeWidth="1.3">
          <path d="M6 1h20v25H6zM6 6H1v25h20v-5" />
        </svg>
      </IconButton>
      <IconButton label="Search" className="ml-3 text-[#d9cde2]">
        <svg viewBox="0 0 29 30" className="h-[30px] w-[29px]" fill="none" stroke="currentColor" strokeWidth="1.2">
          <circle cx="12" cy="13" r="11.3" /><path d="M20 21l8 8" />
        </svg>
      </IconButton>
      <span className="mr-1.5 ml-1.5 h-10 w-px bg-[#3a0f5c]" />
      <IconButton label="Print" className="text-[#d9cde2]">
        <svg viewBox="0 0 27 27" className="size-[27px]" fill="none" stroke="currentColor" strokeWidth="1.3">
          <path d="M5 9V1h17v8M5 21H1V9h25v12h-4M6 15h15v11H6z" /><circle cx="23" cy="12" r=".8" fill="currentColor" />
        </svg>
      </IconButton>
      <IconButton label="Focus" className="ml-[62px]"><FocusIcon /></IconButton>
      <IconButton label="Minimize" className="ml-2.5"><MinIcon /></IconButton>
      <IconButton label="Maximize" className="ml-3"><MaxIcon /></IconButton>
    </div>
  </header>
);

const Thumbnail = () => (
  <svg viewBox="0 0 45 58" className="h-[58px] w-[45px] bg-white" fill="#222" role="img" aria-label="Page 1 preview">
    <path d="M5 1h8v2H5zM2 4h18v2H2z" />
    <path d="M1 6h20v16H1z" fill="#151515" />
    <path d="M2 8h8v1H2zM12 7h7v1h-7zM3 11h6v1H3zM13 12h7v1h-7zM2 15h10v1H2zM6 18h9v1H6z" fill="#888" />
    <path d="M1 23h4v1H1zM2 25h2v4H2zM6 26h3v3H6zM11 25h3v4h-3zM16 26h4v3h-4z" fill="#777" />
    <path d="M1 30h20v3H1zM1 34h20v2H1zM5 38h12v1H5zM1 39h20v3H1zM2 46h18v1H2zM2 49h19v1H2zM2 52h18v1H2zM2 55h18v1H2z" />
    <path d="M22 5h20v41H22z" fill="none" stroke="#222" strokeWidth="1.500" />
    <path d="M24 6v40M22 9h20M22 13h20M22 18h20M22 35h20M22 40h20" stroke="#222" />
    <path d="M26 10h14v2H26zM28 14h12v3H28zM22 19h20v5H22zM29 26h13v7H29zM26 26h10v2H26zM26 36h14v3H26zM22 42h12v3H22zM30 2h8v2h-8z" />
    <path d="M12 56h31v1H12z" fill="#888" />
  </svg>
);

const InfoPanel = () => (
  <aside className="flex w-[195px] shrink-0 flex-col text-black">
    <div className="flex w-[212px] flex-1 flex-col text-center text-[14px] leading-[19px]">
      <h2 className="mt-[25px] text-[15px] leading-[22px] font-bold">Task Information</h2>
      <p className="mt-1">ALLEIGE | KWTRP</p>
      <p>Medium Priority</p>
      <p>E-Citation Queue</p>
      <Button className="mt-1 w-full shrink-0 border-[#c6c6c6]">Actions <Down /></Button>
      <h2 className="mt-[11px] text-[15px] leading-[22px] font-bold">Document Information</h2>
      <p className="mt-1">CITATION FILED *</p>
      <p>Document 1 of 1</p>
      <div className="mt-2 flex justify-between px-[46px] text-[#c8c8c8]">
        <button type="button" aria-label="Previous document">&lt; &lt;</button>
        <button type="button" aria-label="Next document">&gt; &gt;</button>
      </div>
      <Button className="mt-9 w-full shrink-0 border-[#c6c6c6] pl-2.5">Macros <Down /></Button>
      <Button className="mt-5 w-full shrink-0 border-[#c6c6c6] pl-2.5">Scan <Down /></Button>
      <label className="mt-[3px] flex items-center gap-2.5 pl-[46px] text-[15px] font-light text-[#222]">
        <input
          type="checkbox"
          defaultChecked
          className="size-[18px] appearance-none border border-[#c6c6c6] bg-[#f2f2f2] checked:bg-[#5d1c8c] checked:shadow-[inset_0_0_0_3px_#f2f2f2]"
        />
        Display Options
      </label>
      <Button className="mt-2 w-full shrink-0 border-[#c6c6c6] pl-2.5">Save As</Button>
      <div className="mt-auto flex flex-col gap-0.5 pl-[25px] text-left text-[12px]">
        <button type="button" className="flex h-5 items-center gap-2"><span className="w-2 text-[9px] text-[#999]">A</span>Apply</button>
        <button type="button" className="flex h-5 items-center gap-2"><span className="w-2 text-[9px] text-[#999]">X</span>Exit</button>
      </div>
      <input
        aria-label="Enter selection"
        placeholder="Enter selection..."
        className="mt-[22px] mb-3.5 ml-3.5 h-[25px] rounded-[4px] bg-[#e0e0e0] px-2 text-[12px] placeholder:text-[#222]"
      />
    </div>
  </aside>
);

const RightWindow = () => (
  <section className="flex min-w-0 flex-col overflow-hidden bg-[#f2f2f2]">
    <ViewerToolbar />
    <div className="flex min-h-0 flex-1">
      <div className="flex min-w-0 flex-1 flex-col pr-[45px]">
        <div className="overflow-hidden pt-[34px] pb-1.5"><DocumentPage /></div>
        <div className="mt-[5px] ml-[41px] flex h-[73px] w-[72px] flex-col items-center border border-b-0 border-[#dcdcdc] bg-[#ebebeb] pt-px pr-1 text-[12px]">
          <Thumbnail />
          <span className="leading-[14px]">1</span>
        </div>
        <div className="mt-[22px] mr-1.5 flex h-4 justify-between overflow-hidden border-t border-[#dcdcdc] text-[#4b2170]">
          <span className="pt-1 text-[13px] leading-[18px]">n - Original</span>
          <span className="mt-3 mr-1.5 size-2 bg-[#c8c8c8]" />
        </div>
      </div>
      <InfoPanel />
    </div>
  </section>
);

/* ---------- taskbar ---------- */

const APPS = [
  {
    name: "File Explorer", open: true,
    art: (<><path d="M2 4h9l2 3h9v15H2z" fill="#f8c846" /><path d="M2 4h8l2 3H2z" fill="#e0a021" /><path d="M2 8h20v14H2z" fill="#ffd768" /><path d="M6 13h12v9h-3v-4H9v4H6z" fill="#3a8fd8" /></>),
  },
  {
    name: "Edge",
    art: (<><circle cx="12" cy="12" r="11.5" fill="#1a8ad4" /><path d="M1 10C3 3 8 .5 13 .5c6 0 11 5 10.500 10.500C23 15 19 16 16 15c-2-.7 0-2-1-4C12 6 4 7 1 10z" fill="#37c8a0" /><path d="M12 8c-4 1-6 6-3 11 3 4 9 4 13 0-5 1-9-1-9-5 0-2 2-3 2-4s-2-2-3-2z" fill="#0c4a93" /><path d="M0 15h11v8H0z" fill="#c36a13" /><path d="M0 15h11v3H0z" fill="#e88d1f" /></>),
  },
  {
    name: "Outlook",
    art: (<><path d="M7 1h15v12H7z" fill="#28a8ea" /><path d="M14 1h8v7h-8z" fill="#50d9ff" /><path d="M7 8h8v8H7z" fill="#0364b8" /><path d="M5 12l9 6 10-6v11H5z" fill="#1490df" /><path d="M24 12v11H10z" fill="#0f6cbd" /><rect x="0" y="6" width="12" height="12" rx="1" fill="#0078d4" /><circle cx="6" cy="12" r="3" fill="none" stroke="#fff" strokeWidth="1.8" /></>),
  },
  {
    name: "Excel",
    art: (<><path d="M6 1h18v22H6z" fill="#21a366" /><path d="M15 1h9v6h-9z" fill="#33c481" /><path d="M6 12h9v11H6z" fill="#185c37" /><path d="M15 12h9v6h-9z" fill="#107c41" /><path d="M15 18h9v5h-9z" fill="#185c37" /><rect x="0" y="6" width="12" height="12" rx="1" fill="#107c41" /><path d="M3.500 9l5 6.500M8.500 9l-5 6.500" stroke="#fff" strokeWidth="1.8" /></>),
  },
  {
    name: "Calculator",
    art: (<><rect x="3" y="0" width="18" height="24" rx="1" fill="#7d868c" /><path d="M5 2h14v4H5z" fill="#3fc8f4" /><path d="M5 8h4v4H5zM10 8h4v4h-4zM15 8h4v4h-4zM5 13h4v4H5zM10 13h4v4h-4zM5 18h4v4H5zM10 18h4v4h-4z" fill="#dfe4e8" /><path d="M15 13h4v9h-4z" fill="#1c4f8e" /></>),
  },
  {
    name: "Case Manager", open: true, active: true,
    art: (<><path d="M0 0h24v24H0z" fill="#045a9c" /><g fill="#fff"><circle cx="7" cy="4" r="1.300" /><circle cx="10" cy="6" r="1.400" /><circle cx="14" cy="7" r="1.800" /><circle cx="18" cy="6" r="1.400" /><circle cx="20.500" cy="3.500" r="1" /><circle cx="7" cy="9" r="1.800" /><circle cx="4" cy="12" r="1.300" /><circle cx="7" cy="15" r="1.800" /><circle cx="10" cy="17" r="1.300" /><circle cx="14" cy="18" r="1.600" /><circle cx="17" cy="15" r="1.800" /><circle cx="16" cy="11" r="1.400" /><circle cx="20" cy="12" r="1.300" /><circle cx="4" cy="19" r="1.200" /><circle cx="17" cy="21" r="1.200" /></g><path d="M7 4l7 3 4-1 2.500-2.500M7 4v5l-3 3 3 3 7 3 3-3-1-4M7 15l-3 4M14 18l3 3M17 15l3-3M14 7l2 4" fill="none" stroke="#fff" strokeWidth=".9" /></>),
  },
  {
    name: "Word", open: true,
    art: (<><path d="M6 1h18v6H6z" fill="#41a5ee" /><path d="M6 7h18v5H6z" fill="#2b7cd3" /><path d="M6 12h18v6H6z" fill="#185abd" /><path d="M6 18h18v5H6z" fill="#103f91" /><rect x="0" y="6" width="12" height="12" rx="1" fill="#185abd" /><path d="M2.500 9l1.700 6L6 9.500 7.800 15l1.700-6" fill="none" stroke="#fff" strokeWidth="1.400" /></>),
  },
  {
    name: "Chrome",
    art: (<><circle cx="12" cy="12" r="12" fill="#fbc116" /><path d="M12 12L1.600 6A12 12 0 0 1 22.400 6z" fill="#e33b2e" /><path d="M12 12L1.600 6A12 12 0 0 0 12 24l5-9z" fill="#229a49" /><circle cx="12" cy="12" r="5.800" fill="#fff" /><circle cx="12" cy="12" r="4.500" fill="#3b7ded" /></>),
  },
  {
    name: "Teams", open: true,
    art: (<><circle cx="13" cy="4" r="3.500" fill="#7b83eb" /><circle cx="20" cy="5" r="2.500" fill="#5059c9" /><path d="M8 8h15v9a6 6 0 0 1-15 3z" fill="#5b62cf" /><rect x="0" y="6" width="12" height="12" rx="1" fill="#464eb8" /><path d="M3 9h6M6 9v6.500" stroke="#fff" strokeWidth="1.600" /><circle cx="18" cy="17" r="7.500" fill="#cf3038" /></>),
  },
  {
    name: "Sticky Notes", note: true,
    art: (<><path d="M1 1h22v11L12 23H1z" fill="#ffda00" /><path d="M12 12h11L12 23z" fill="#444" /><path d="M12 23L23 12v11z" fill="#ffb900" /></>),
  },
  {
    name: "G App", open: true,
    art: (<><rect x="2" y="2" width="20" height="20" rx="4" fill="#2d0874" /><path d="M16 8a5 5 0 1 0 1 5h-4M13 13l4 5" fill="none" stroke="#fff" strokeWidth="2.200" /><path d="M5 5h1v1H5zM17 4h1v1h-1zM9 4h1v1H9zM5 16h1v1H5z" fill="#c9a8ff" /></>),
  },
];

const Taskbar = () => (
  <footer className="flex h-10 shrink-0 items-stretch bg-linear-to-r from-[#1b2a2e] to-[#243338] text-white">
    <IconButton label="Start" className="w-12">
      <svg viewBox="0 0 16 16" className="size-4" fill="#fff"><path d="M0 2.300L6.800 1.300v6.300H0zM7.600 1.200L16 0v7.600H7.600zM0 8.400h6.800v6.300L0 13.700zM7.600 8.400H16V16l-8.400-1.200z" /></svg>
    </IconButton>
    <label className="flex w-[288px] shrink-0 items-center gap-3 border border-[#bdbdbd] bg-[#f1f1f1] pl-3 text-[#333]">
      <svg viewBox="0 0 17 17" className="size-[17px] shrink-0" fill="none" stroke="#222" strokeWidth="1.4"><circle cx="10.500" cy="6.500" r="5.500" /><path d="M6.500 10.500L.8 16.300" /></svg>
      <input aria-label="Search" placeholder="Type here to search" className="min-w-0 flex-1 bg-transparent text-[14px] placeholder:text-[#333]" />
    </label>
    <div className="ml-[3px] flex gap-px">
      {APPS.map((a) => (
        <button
          key={a.name}
          type="button"
          aria-label={a.name}
          className={`flex w-12 flex-col items-center justify-between ${a.active ? "bg-[#475a60]" : ""} ${a.note ? "bg-[#a5602b]" : ""}`}
        >
          <svg viewBox="0 0 24 24" className="mt-2 size-6">{a.art}</svg>
          <span className={`h-0.5 ${a.note ? "w-full bg-[#ff7a00]" : a.active ? "w-full bg-[#76b9ed]" : a.open ? "w-10 bg-[#76b9ed]" : "w-10"}`} />
        </button>
      ))}
    </div>
    <div className="ml-auto flex items-center pr-1">
      <IconButton label="Show hidden icons"><svg viewBox="0 0 14 8" className="h-2 w-3.5" fill="none" stroke="#fff" strokeWidth="1.3"><path d="M1 7l6-6 6 6" /></svg></IconButton>
      <IconButton label="Microphone" className="ml-2.5"><svg viewBox="0 0 12 17" className="h-[17px] w-3" fill="none" stroke="#fff"><rect x="3" y="0" width="6" height="11" rx="1" fill="#fff" stroke="none" /><path d="M1 8v3q0 2 5 2t5-2V8M6 13v3M3 16.300h6" /></svg></IconButton>
      <IconButton label="Network" className="ml-2.5"><svg viewBox="0 0 17 15" className="h-[15px] w-[17px]" fill="none" stroke="#fff" strokeWidth="1.1"><path d="M7 2h9v8.500H4V7M10 10.500V14M6 14h8M1 1h4v4H1zM3 5v3" /></svg></IconButton>
      <IconButton label="Volume" className="ml-[7px]"><svg viewBox="0 0 17 14" className="h-3.5 w-[17px]" fill="none" stroke="#fff" strokeWidth="1.1"><path d="M1 5h2l4-4v12L3 9H1zM9 5q1.500 2 0 4M11.500 3q3 4 0 8M14 1q4.500 6 0 12" /></svg></IconButton>
      <IconButton label="OneDrive" className="ml-[7px]"><svg viewBox="0 0 17 11" className="h-[11px] w-[17px]"><path d="M4 11a4 4 0 0 1-.5-7.500A5 5 0 0 1 13 4a3.600 3.600 0 0 1 .500 7z" fill="#1a7fd4" /><path d="M4 11L11 5.500Q14 3.500 16 6q2 3.500-2.500 5z" fill="#2aa5f0" /></svg></IconButton>
      <div className="mr-[7px] ml-[9px] w-[56px] text-center text-[12px] leading-[18px] whitespace-nowrap">
        <p>11:17 AM</p>
        <p>7/16/2025</p>
      </div>
      <IconButton label="Notifications" className="ml-2.5"><svg viewBox="0 0 16 16" className="size-4" fill="none" stroke="#fff" strokeWidth="1.2"><path d="M1 1h14v11.500h-5L8 15l-2-2.500H1z" /></svg></IconButton>
      <span className="ml-[19px] h-10 w-px bg-[#7c878b]" />
    </div>
  </footer>
);

export default function App() {
  return (
    <div className="flex h-screen flex-col overflow-hidden bg-[#f2f2f2] font-['Open_Sans','Noto_Sans',sans-serif]">
      <div className="grid min-h-0 flex-1 grid-cols-[8fr_7fr]">
        <LeftWindow />
        <RightWindow />
      </div>
      <Taskbar />
    </div>
  );
}
